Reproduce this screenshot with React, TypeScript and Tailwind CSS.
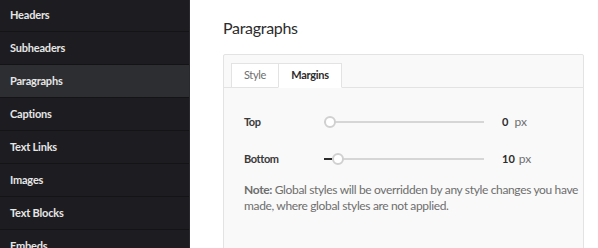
import { useState } from 'react';

const ITEMS = ['Headers', 'Subheaders', 'Paragraphs', 'Captions', 'Text Links', 'Images', 'Text Blocks', 'Embeds'];

function Slider({ value, max = 100 }: { value: number; max?: number }) {
  const pct = (value / max) * 100;
  return (
    <div className="relative w-[160px] h-[12px] flex items-center">
      <div className="w-full h-[2px] bg-[#d6d6d6]" />
      <div className="absolute left-0 h-[2px] bg-[#2c2c2c]" style={{ width: `${pct}%` }} />
      <div
        className="absolute w-[12px] h-[12px] rounded-full border-2 border-[#d0d0d0] bg-white -translate-x-1/2"
        style={{ left: `calc(${pct}% + 6px)` }}
      />
    </div>
  );
}

export default function App() {
  const [tab, setTab] = useState('Margins');

  return (
    <div className="w-[598px] h-[248px] flex overflow-hidden bg-white" style={{ fontFamily: 'Lato, sans-serif' }}>
      <aside className="w-[190px] shrink-0 bg-[#1d1d21] border-r border-[#2a2a2e] -mt-px">
        {ITEMS.map((item) => (
          <div
            key={item}
            className={`h-[33px] flex items-center pl-[10px] text-[11px] tracking-[-0.2px] font-bold text-[#e6e6e6] border-b border-[#141417] ${
              item === 'Paragraphs' ? 'bg-[#2d2e32]' : ''
            }`}
          >
            {item}
          </div>
        ))}
      </aside>

      <main className="flex-1 pl-[33px] pr-[14px] pt-[16px]">
        <h1 className="text-[16px] tracking-[-0.3px] text-[#2c2c2c] leading-[24px]">Paragraphs</h1>

        <div className="mt-[14px] h-[220px] bg-[#f9f9f9] border border-[#e3e3e3] rounded-[2px]">
          <div className="flex pl-[7px] pt-[8px] border-b border-[#e3e3e3]">
            {['Style', 'Margins'].map((t) => (
              <button
                key={t}
                onClick={() => setTab(t)}
                className={`h-[25px] -mb-px border border-[#e3e3e3] bg-white text-[11px] tracking-[-0.3px] ${
                  t === 'Margins'
                    ? 'w-[64px] font-bold text-[#2c2c2c] border-b-white'
                    : 'w-[47px] text-[#6e6e6e] border-r-0'
                } ${tab === t ? '' : ''}`}
              >
                {t}
              </button>
            ))}
          </div>

          <div className="pl-[20px] pt-[27px]">
            <div className="flex items-center h-[14px]">
              <span className="w-[80px] text-[11px] tracking-[-0.4px] font-bold text-[#3a3a3a]">Top</span>
              <Slider value={0} />
              <span className="ml-[18px] text-[11px] font-bold text-[#2c2c2c]">0</span>
              <span className="ml-[6px] text-[12px] text-[#6e6e6e]">px</span>
            </div>
            <div className="flex items-center h-[14px] mt-[23px]">
              <span className="w-[80px] text-[11px] tracking-[-0.4px] font-bold text-[#3a3a3a]">Bottom</span>
              <Slider value={5} />
              <span className="ml-[18px] text-[11px] font-bold text-[#2c2c2c]">10</span>
              <span className="ml-[4px] text-[12px] text-[#6e6e6e]">px</span>
            </div>
            <p className="mt-[16px] w-[336px] text-[12px] tracking-[-0.35px] leading-[16px] text-[#6e6e6e]">
              <span className="font-bold">Note:</span> Global styles will be overridden by any style changes you have
              made, where global styles are not applied.
            </p>
          </div>
        </div>
      </main>
    </div>
  );
}
